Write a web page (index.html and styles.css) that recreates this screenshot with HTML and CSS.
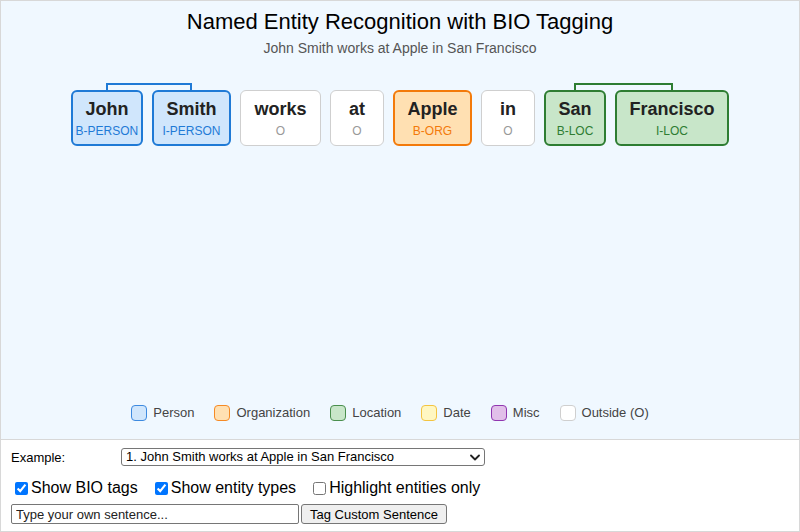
FILE: index.html
```html
<!DOCTYPE html>
<html>
<head>
<meta charset="utf-8">
<link rel="stylesheet" href="styles.css">
</head>
<body>
<div class="frame">
  <div class="canvas">
    <h1 class="title">Named Entity Recognition with BIO Tagging</h1>
    <p class="subtitle">John Smith works at Apple in San Francisco</p>
    <div class="tokens">
      <div class="tok per span-start"><span class="w">John</span><span class="t">B-PERSON</span></div>
      <div class="tok per span-end"><span class="w">Smith</span><span class="t">I-PERSON</span></div>
      <div class="tok out"><span class="w">works</span><span class="t">O</span></div>
      <div class="tok out"><span class="w">at</span><span class="t">O</span></div>
      <div class="tok org"><span class="w">Apple</span><span class="t">B-ORG</span></div>
      <div class="tok out"><span class="w">in</span><span class="t">O</span></div>
      <div class="tok loc span-start"><span class="w">San</span><span class="t">B-LOC</span></div>
      <div class="tok loc span-end"><span class="w">Francisco</span><span class="t">I-LOC</span></div>
    </div>
    <div class="legend">
      <div class="lg"><span class="sw per"></span>Person</div>
      <div class="lg"><span class="sw org"></span>Organization</div>
      <div class="lg"><span class="sw loc"></span>Location</div>
      <div class="lg"><span class="sw date"></span>Date</div>
      <div class="lg"><span class="sw misc"></span>Misc</div>
      <div class="lg"><span class="sw out"></span>Outside (O)</div>
    </div>
  </div>
  <div class="controls">
    <div class="row-example">
      <label class="ex-label" for="ex">Example:</label>
      <div class="select-wrap">
        <select id="ex" class="ex-select">
          <option>1. John Smith works at Apple in San Francisco</option>
          <option>2. Barack Obama visited Paris on Monday</option>
        </select>
        <svg class="chev" width="10" height="7" viewBox="0 0 10 7"><path d="M1 1.5 L5 5.5 L9 1.5" fill="none" stroke="#222" stroke-width="1.8" stroke-linecap="round" stroke-linejoin="round"/></svg>
      </div>
    </div>
    <div class="row-checks">
      <label class="chk"><input type="checkbox" checked>Show BIO tags</label>
      <label class="chk"><input type="checkbox" checked>Show entity types</label>
      <label class="chk"><input type="checkbox">Highlight entities only</label>
    </div>
    <div class="row-custom">
      <input class="custom-input" type="text" placeholder="Type your own sentence...">
      <button class="custom-btn">Tag Custom Sentence</button>
    </div>
  </div>
</div>
</body>
</html>
```

FILE: styles.css
```css
* { box-sizing: border-box; }
html, body { margin: 0; padding: 0; background: #fff; }
body { font-family: "Liberation Sans", Arial, sans-serif; color: #000; }

.frame {
  width: 800px;
  height: 532px;
  border: 1px solid #d8d8d8;
  display: flex;
  flex-direction: column;
  overflow: hidden;
}

.canvas {
  height: 439px;
  flex: none;
  background: #f0f8ff;
  border-bottom: 1px solid #d8d8d8;
  display: flex;
  flex-direction: column;
  align-items: center;
  padding: 8px 0 18px;
}

.title {
  margin: 0;
  font-size: 22px;
  line-height: 26px;
  font-weight: normal;
  color: #000;
}
.subtitle {
  margin: 5px 0 0;
  font-size: 14px;
  line-height: 16px;
  color: #555;
}

.tokens {
  margin-top: 34px;
  display: flex;
  gap: 9px;
  justify-content: center;
}

.tok {
  position: relative;
  height: 56px;
  min-width: 54px;
  border-radius: 6px;
  border: 2px solid;
  padding: 0 2px;
  display: flex;
  flex-direction: column;
  align-items: center;
  justify-content: center;
  gap: 3px;
}
.tok .w {
  font-size: 18px;
  line-height: 22px;
  font-weight: bold;
  color: #222;
  white-space: nowrap;
  padding: 0 10.5px;
}
.tok .t {
  font-size: 12px;
  line-height: 16px;
  white-space: nowrap;
}

.tok.per { background: #d0e6fc; border-color: #1f7ad6; --c: #1f7ad6; }
.tok.per .t { color: #1f7ad6; }
.tok.org { background: #ffe0b2; border-color: #f37a0a; --c: #f37a0a; }
.tok.org .t { color: #f37a0a; }
.tok.loc { background: #c8e6c9; border-color: #2e7d32; --c: #2e7d32; }
.tok.loc .t { color: #2e7d32; }
.tok.out { background: #fff; border: 1px solid #cfcfcf; padding: 0 3px; }
.tok.out .t { color: #999; }

.span-start::before,
.span-end::before {
  content: "";
  position: absolute;
  top: -9px;
  height: 7px;
  border-top: 2px solid var(--c);
}
.span-start::before {
  left: calc(50% - 1px);
  right: -7px;
  border-left: 2px solid var(--c);
}
.span-end::before {
  left: -7px;
  right: calc(50% - 1px);
  border-right: 2px solid var(--c);
}

.legend {
  margin-top: auto;
  display: flex;
  justify-content: center;
  gap: 20px;
  padding-right: 20px;
  font-size: 13px;
  line-height: 16px;
  color: #444;
}
.lg { display: flex; align-items: center; gap: 6px; white-space: nowrap; }
.sw {
  width: 16px;
  height: 16px;
  border-radius: 4px;
  border: 1px solid;
}
.sw.per { background: #d0e6fc; border-color: #3d8ae0; }
.sw.org { background: #ffe0b2; border-color: #f58a25; }
.sw.loc { background: #c8e6c9; border-color: #4a8f4e; }
.sw.date { background: #fff7c2; border-color: #f3c441; }
.sw.misc { background: #e1bfe9; border-color: #9036b0; }
.sw.out { background: #fff; border-color: #cfcfcf; }

.controls {
  flex: 1;
  background: #fff;
  padding: 8px 0 0 10px;
  font-size: 13px;
}

.row-example {
  display: flex;
  align-items: center;
  height: 18px;
}
.ex-label {
  width: 110px;
  font-size: 13px;
  color: #000;
}
.select-wrap {
  position: relative;
  width: 364px;
  height: 18px;
}
.ex-select {
  appearance: none;
  -webkit-appearance: none;
  width: 100%;
  height: 18px;
  border: 1px solid #767676;
  border-radius: 3px;
  background: #fff;
  font-family: "Liberation Sans", Arial, sans-serif;
  font-size: 13px;
  line-height: 16px;
  padding: 0 20px 0 4px;
  color: #000;
  margin: 0;
}
.chev {
  position: absolute;
  right: 5px;
  top: 6px;
  pointer-events: none;
}

.row-checks {
  margin-top: 13px;
  display: flex;
  align-items: center;
  gap: 13px;
  height: 18px;
  font-size: 16px;
}
.chk {
  display: flex;
  align-items: center;
  white-space: nowrap;
}
.chk input {
  width: 13px;
  height: 13px;
  margin: 3px 3px 3px 4px;
}

.row-custom {
  margin-top: 7px;
  display: flex;
  align-items: center;
  gap: 2px;
}
.custom-input {
  width: 288px;
  height: 20px;
  border: 1px solid #767676;
  border-radius: 2px;
  padding: 0 4px;
  font-family: "Liberation Sans", Arial, sans-serif;
  font-size: 13px;
  margin: 0;
}
.custom-input::placeholder { color: #222; }
.custom-btn {
  height: 20px;
  width: 146px;
  border: 1px solid #767676;
  border-radius: 3px;
  background: #efefef;
  font-family: "Liberation Sans", Arial, sans-serif;
  font-size: 13px;
  color: #000;
  padding: 0 6px;
  margin: 0;
}
```
